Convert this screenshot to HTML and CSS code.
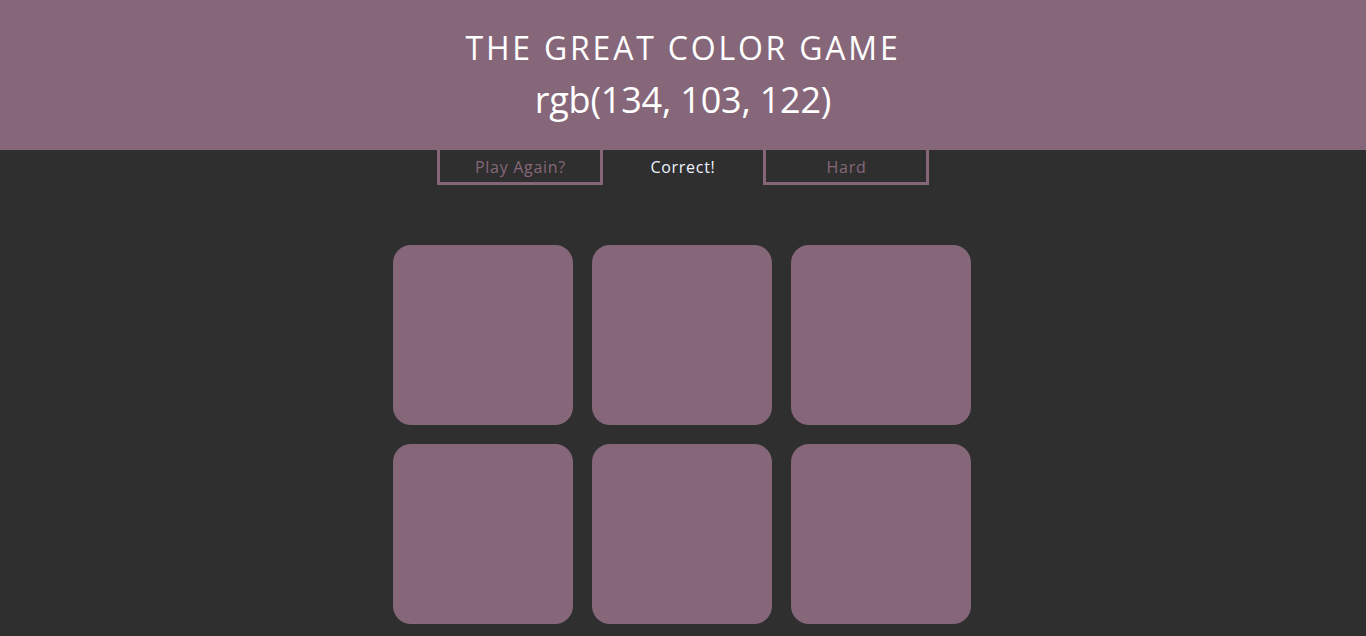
FILE: index.html
```html
<!DOCTYPE html>
<html>
<head>
<meta charset="utf-8">
<title>The Great Color Game</title>
<link rel="stylesheet" href="styles.css">
</head>
<body>
<header class="header">
  <h1 class="title">THE GREAT COLOR GAME</h1>
  <div class="rgb">rgb(134, 103, 122)</div>
</header>
<nav class="bar">
  <button class="btn">Play Again?</button>
  <span class="message">Correct!</span>
  <button class="btn">Hard</button>
</nav>
<main class="grid">
  <div class="square"></div>
  <div class="square"></div>
  <div class="square"></div>
  <div class="square"></div>
  <div class="square"></div>
  <div class="square"></div>
</main>
</body>
</html>
```
FILE: styles.css
```css
html, body {
  margin: 0;
  padding: 0;
  background: #2f2f2f;
  font-family: "Open Sans", "Noto Sans", sans-serif;
  overflow: hidden;
}
.header {
  background: rgb(134, 103, 122);
  height: 150px;
  box-sizing: border-box;
  padding-top: 28px;
  text-align: center;
  color: #fff;
}
.title {
  margin: 0;
  font-weight: 400;
  font-size: 32px;
  line-height: 40px;
  letter-spacing: 2.8px;
}
.rgb {
  font-size: 36px;
  line-height: 50px;
  margin-top: 7px;
  letter-spacing: -0.2px;
}
.bar {
  display: flex;
  justify-content: center;
  align-items: stretch;
  height: 35px;
}
.btn {
  width: 166px;
  height: 35px;
  box-sizing: border-box;
  background: transparent;
  border: 3px solid rgb(134, 103, 122);
  border-top: none;
  color: rgb(134, 103, 122);
  font-family: inherit;
  font-size: 16px;
  letter-spacing: 0.7px;
  padding: 2px 0 0 1px;
}
.message {
  width: 160px;
  display: flex;
  align-items: center;
  justify-content: center;
  color: #eef4ff;
  font-size: 16px;
  letter-spacing: 0.7px;
  padding-bottom: 2px;
  box-sizing: border-box;
}
.grid {
  width: 600px;
  margin: 50px auto 0;
  display: grid;
  grid-template-columns: repeat(3, 180px);
  grid-auto-rows: 180px;
  gap: 19px;
  padding: 10px;
  box-sizing: border-box;
}
.square {
  background: rgb(134, 103, 122);
  border-radius: 18px;
}
```
